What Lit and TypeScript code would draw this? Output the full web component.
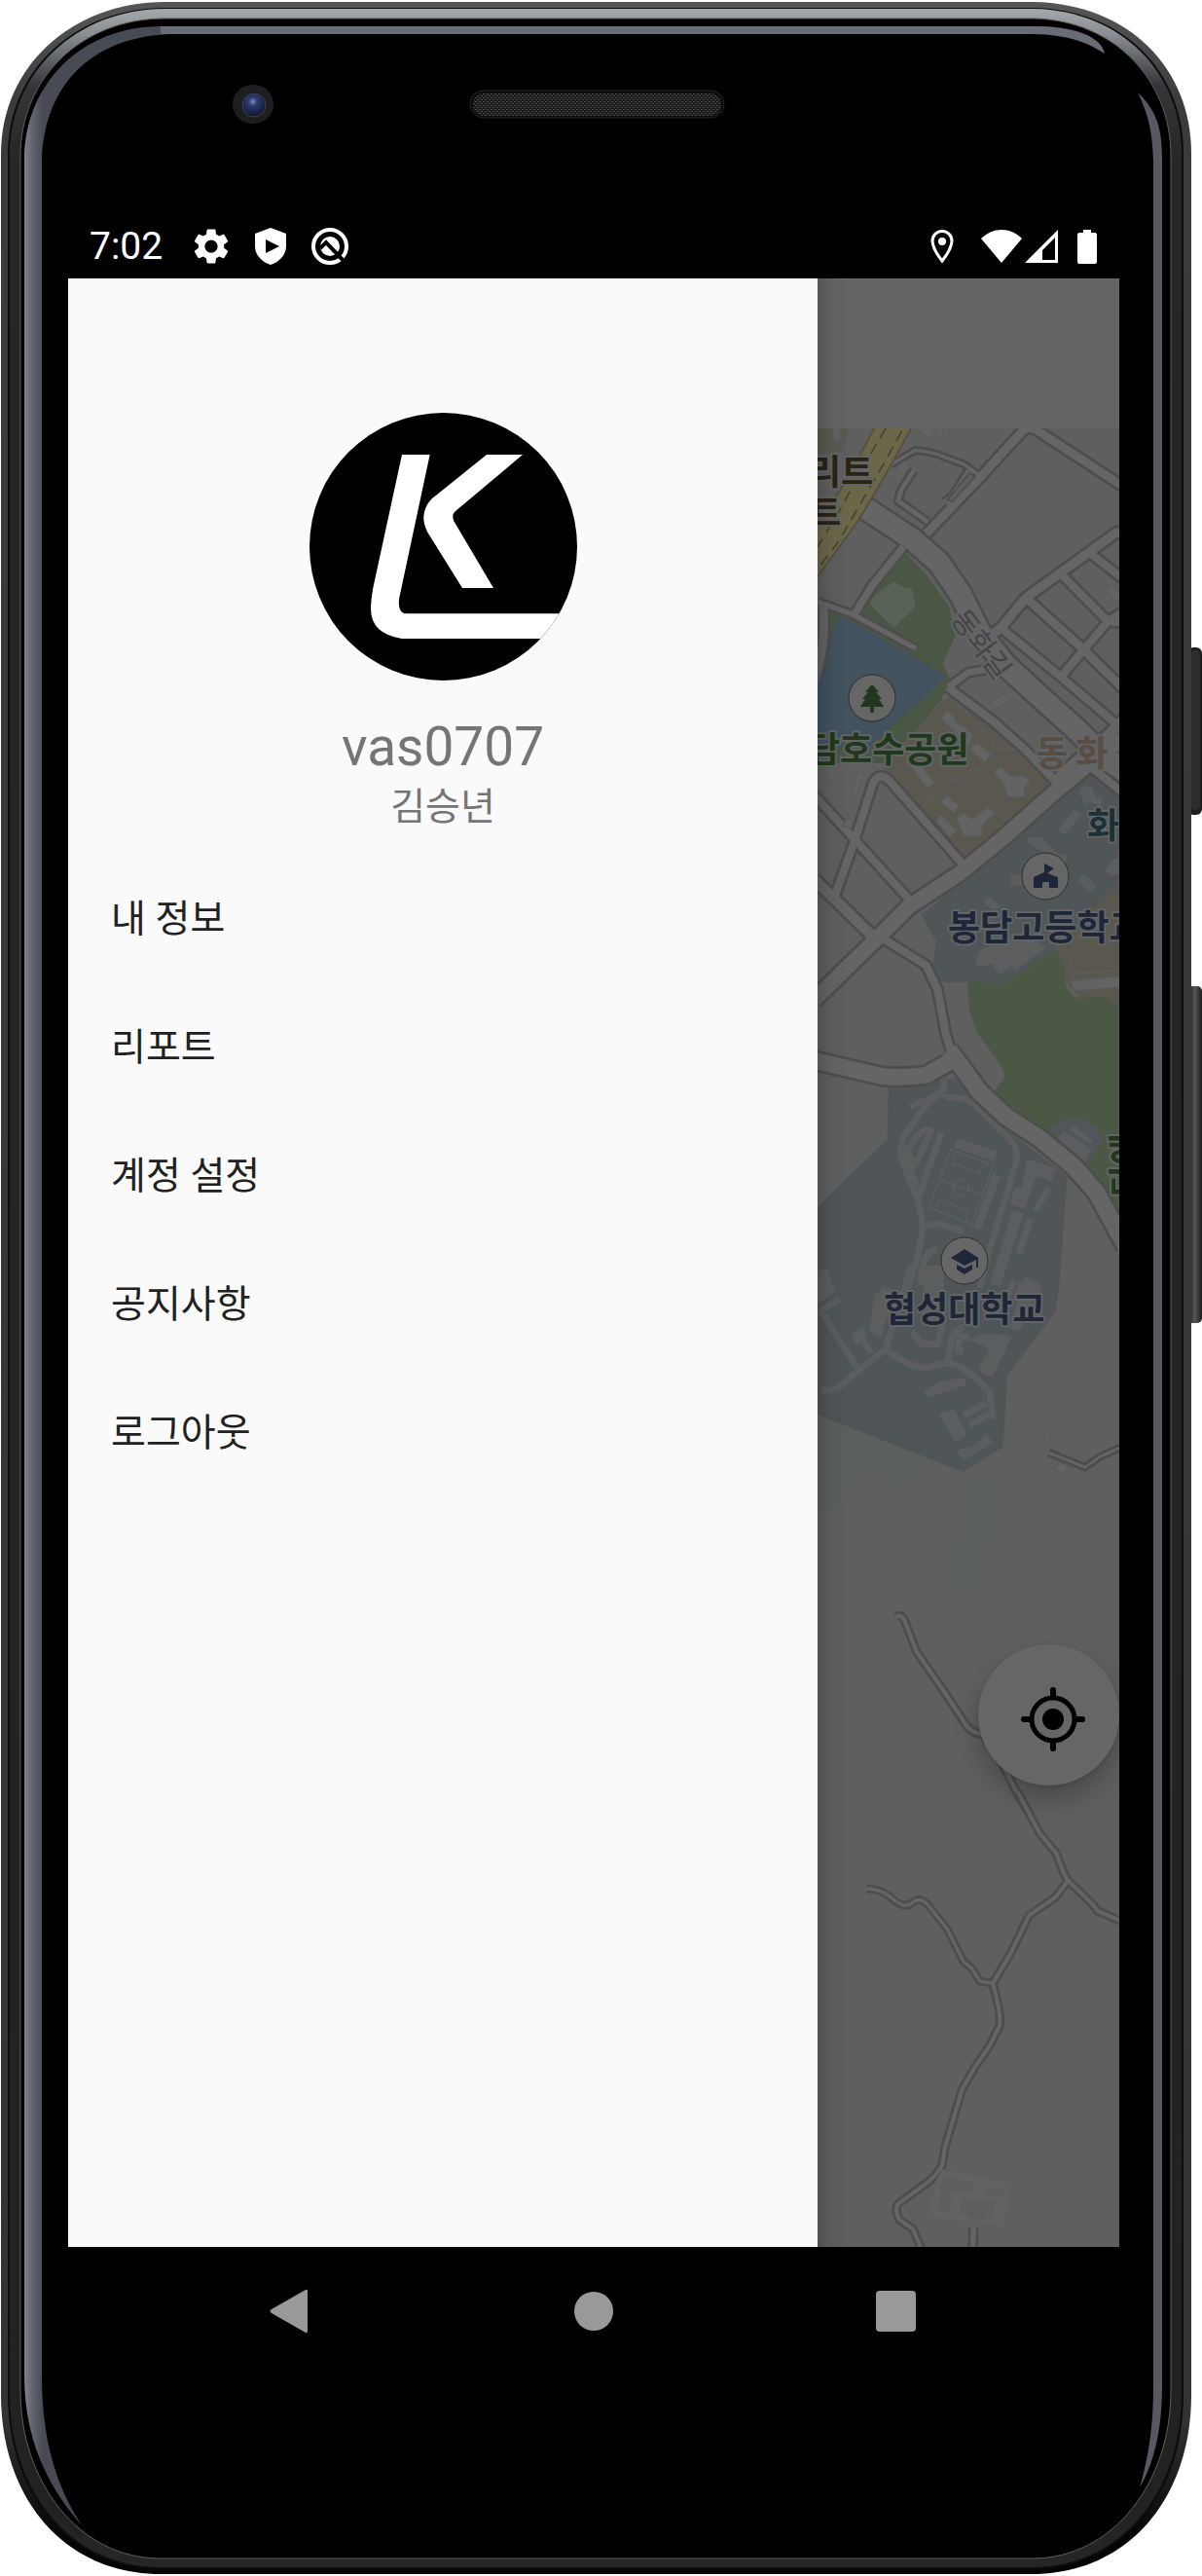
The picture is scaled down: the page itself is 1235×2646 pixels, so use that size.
import { LitElement, html, svg, css } from "lit";
import { customElement } from "lit/decorators.js";

type Road = { d: string; w: number };

const MENU = ["내 정보", "리포트", "계정 설정", "공지사항", "로그아웃"];

/* Roads of the upper map tile. */
const ROADS_NORTH: Road[] = [
  { d: "M205 305L350 400L435 475L500 570L560 690L640 790L760 900L860 990L940 1070L1010 1120", w: 76 },
  { d: "M395 385L560 212L690 70Q705 52 730 62L1000 238", w: 36 },
  { d: "M285 172L360 128Q410 130 450 148L510 170L560 205", w: 20 },
  { d: "M358 188L318 250L308 284L400 348", w: 24 },
  { d: "M530 192L480 270L455 290", w: 34 },
  { d: "M325 425L228 545L175 630", w: 32 },
  { d: "M60 594L165 632L362 738", w: 26 },
  { d: "M76 600Q88 700 60 810", w: 36 },
  { d: "M590 700L625 675L702 582L980 382L1010 378", w: 38 },
  { d: "M702 582L880 742L1010 870", w: 36 },
  { d: "M812 510L955 655L1010 660", w: 34 },
  { d: "M905 448L1010 530", w: 34 },
  { d: "M625 675L815 830L985 975", w: 34 },
  { d: "M1010 620L955 655L880 742L815 820", w: 34 },
  { d: "M462 858L525 812L600 800", w: 30 },
  { d: "M462 858L605 965L700 1050L800 1155", w: 34 },
  { d: "M790 1150L865 1080L940 1020L1010 950", w: 42 },
  { d: "M1010 1010L900 1090L780 1190L640 1315L500 1430L340 1535L250 1625L50 1820", w: 56 },
  { d: "M880 1085L1010 1190", w: 34 },
  { d: "M50 1190L175 1328L345 1515", w: 34 },
  { d: "M505 1400L360 1235L285 1150Q255 1115 232 1150L175 1328L110 1510", w: 34 },
  { d: "M50 1450L235 1630", w: 42 },
  { d: "M250 1625L395 1715L430 1790L455 1925L480 2010", w: 34 },
  { d: "M465 1975L560 2105L640 2180L740 2245L850 2335L920 2415L1010 2580", w: 62 },
  { d: "M50 2008L260 2057Q330 2062 395 2053L480 2005", w: 60 },
];

/* Thin trails of the lower, empty part. */
const ROADS_SOUTH: Road[] = [
  { d: "M210 300Q250 300 280 322Q325 365 350 345Q375 322 400 350L460 425L510 525L535 545L560 585L600 592", w: 20 },
  { d: "M832 275L795 325L712 382L655 500L600 592", w: 22 },
  { d: "M676 0L745 130L795 190L820 255L832 275L910 350L922 368L1000 402", w: 22 },
  { d: "M600 592Q630 700 620 725L590 785L545 850L505 920L452 1100L445 1150Q430 1180 400 1205L310 1270Q295 1285 312 1320L355 1350L382 1415", w: 22 },
  { d: "M541 1345L538 1420", w: 26 },
];

const TRAILS: Road[] = [
  { d: "M302 1010Q322 1000 332 1030L365 1110L450 1225L510 1310Q530 1345 570 1348L610 1400L650 1470L676 1520L712 1575", w: 22 },
  { d: "M772 538L885 580L930 550L1000 520", w: 18 },
];

const WALKS = [
  "M345 830L420 800L450 775L450 745",
  "M450 790Q400 800 350 890Q310 930 318 990L370 1120L385 1200L370 1290L335 1390",
  "M450 800Q520 800 550 830L650 930Q685 960 670 1010L640 1110L590 1270L560 1390",
  "M340 960Q380 890 410 905L360 1010L330 960L365 1080",
  "M442 910L370 1110",
  "M385 1200L430 1190L510 1215",
  "M430 1270Q380 1270 380 1380",
];

const roadSet = (roads: Road[]) => svg`
  <g class="casing">${roads.map((r) => svg`<path d=${r.d} stroke-width=${r.w + 6} />`)}</g>
  <g class="lane">${roads.map((r) => svg`<path d=${r.d} stroke-width=${Math.max(r.w - 10, 8)} />`)}</g>
`;

@customElement("map-view")
export class MapView extends LitElement {
  static styles = css`
    :host {
      display: block;
      position: relative;
      overflow: hidden;
      background: #5f5f5f;
    }
    .map {
      display: block;
      width: 100%;
      height: 100%;
    }
    .casing path,
    .lane path {
      fill: none;
      stroke-linejoin: round;
    }
    .casing path {
      stroke: #4d4d4d;
    }
    .lane path {
      stroke: #656565;
    }
    .walk {
      fill: none;
      stroke: #5b5d5f;
      stroke-width: 20;
      stroke-linejoin: round;
    }
    .building {
      fill: #626363;
      stroke: #5a5a5a;
      stroke-width: 3;
    }
    .pale {
      fill: #5b5d5f;
    }
    .pitch {
      fill: none;
      stroke: #5c5e60;
      stroke-width: 4;
    }
    .block {
      fill: #5f5f5f;
      stroke: #505050;
      stroke-width: 6;
    }
    .pin {
      fill: #666;
      stroke: #2e2e2e;
      stroke-width: 1;
    }
    .label {
      font-family: "Noto Sans CJK KR", "Noto Sans", sans-serif;
      font-size: 36px;
      font-weight: 700;
      paint-order: stroke;
      stroke: #626466;
      stroke-width: 4px;
      stroke-linejoin: round;
    }
    .navy {
      fill: #1e2638;
    }
    .green {
      fill: #20381b;
    }
    .brown {
      fill: #2b2214;
    }
    .teal {
      fill: #1d3034;
    }
    .tan {
      fill: #574d43;
    }
    .street {
      fill: #444;
      font-size: 29px;
      font-weight: 400;
    }
    .locate {
      position: absolute;
      right: 0;
      bottom: 474px;
      width: 145px;
      height: 145px;
      padding: 8px 0 0 9px;
      border: 0;
      border-radius: 50%;
      background: #666;
      box-shadow: 0 14px 28px rgba(0, 0, 0, 0.24), 0 2px 4px rgba(0, 0, 0, 0.1);
      display: grid;
      place-items: center;
    }
    .locate svg {
      width: 66px;
      height: 66px;
      display: block;
    }
  `;

  render() {
    return html`
      <svg class="map" viewBox="840 440 310 1868" preserveAspectRatio="xMinYMin slice" role="img" aria-label="지도">
        <g transform="translate(820 420) scale(.33333)">
          <path fill="#5a5a52" d="M60 60H155L140 130L60 140Z" />
          <path fill="#4b5745" d="M330 442L395 510L465 610L485 700L445 785L468 830L440 900L370 985L260 1092H60V1030L90 690L80 612L170 640Z" />
          <path fill="#596257" d="M298 532L330 555L350 550L362 610L295 675L220 600L240 570Z" />
          <path fill="#42525f" d="M120 650Q135 642 155 650L457 822L400 880L290 975L215 1045H60V850L95 750L102 692Z" />
          <path fill="#5a574f" d="M480 880L610 980L780 1160L515 1390L380 1240L262 1105L370 985L445 900Z" />
          <path fill="#505558" d="M900 1108L1000 1180V1480L900 1550L790 1665L635 1770L410 1765L425 1640L380 1560L700 1290Z" />
          <path fill="#5a574f" d="M1000 1455L905 1545L790 1665L830 1770L870 1815L1000 1850Z" />
          <path fill="#4c5846" d="M522 1763L635 1770L790 1665Q822 1700 825 1770Q835 1815 870 1815L940 1810L1000 1850V2510L930 2390L770 2230L600 2110L636 2060Q638 2040 620 2015L550 1920Q525 1850 525 1820Z" />
          <path fill="#52565a" d="M775 2225Q800 2190 850 2186Q910 2190 942 2245L890 2325Z" />
          <path fill="#505558" d="M430 2065H485L600 2190L830 2365L805 2700L795 2780L645 2978L632 3198L510 3277L60 3100V2460L275 2250L278 2090Z" />
          <path fill="#5c605c" d="M60 3105L400 3240Q350 3330 300 3320Q250 3300 230 3260L150 3340Q140 3390 60 3410Z" />
          <path fill="#5d615e" d="M535 3290Q570 3270 600 3310Q625 3400 590 3470Q550 3540 555 3620Q540 3670 490 3650Q455 3570 485 3480Q535 3400 530 3330Z" />

          <g transform="translate(0 1320)">
            ${WALKS.map((d) => svg`<path class="walk" d=${d} />`)}
            <path class="pitch" d="M470 962L602 1010L536 1192L404 1142ZM436 1056L570 1102M488 970L476 1005L562 1036L576 1000M425 1148L438 1118L526 1152L516 1186" />
            <circle class="pitch" cx="502" cy="1080" r="24" />
            <path class="pale" d="M492 928L615 968L605 1000L480 955ZM600 1035L625 1045L562 1212L540 1205ZM706 990L798 1022L780 1060L735 1045L698 1145L650 1130L668 1080L690 1078ZM765 1075L780 1090L740 1155L722 1148ZM660 1150L695 1158L625 1380H590ZM706 1172L726 1180L690 1290L670 1282Z" />
            <path class="pale" d="M710 0L750 0L800 50L835 60L820 80L710 20ZM655 115H700V150H655ZM560 350L640 310L700 290L765 340L670 410L660 395L620 425L600 390L560 400L545 385ZM590 180L625 215L600 225L570 200ZM880 112L918 150L900 170L862 135ZM980 60L1000 80V110L965 120L945 100Z" />
            <path class="pale" d="M850 888L910 935L900 945L838 905ZM820 905L905 960L885 1000L800 930Z" />
            <path class="pitch" d="M1000 190Q840 280 840 390Q840 420 870 420L1000 410" />
            <path class="building" d="M842 442L1000 428V462L848 474Z" />
          </g>
          <g transform="translate(0 2640) scale(1 1.0714)">
            <path class="walk" d="M70 360Q110 362 130 345L270 240L290 180L350 0M180 290L70 130L130 95M225 250L200 215M270 240Q350 300 400 292L460 280L475 200L510 175M460 280Q510 280 590 365L600 440M510 245H490L500 205H530" />
            <path class="walk" d="M510 432L580 395M530 460L590 425M380 0V50M350 190L380 225L430 225L450 150M665 45L640 100M690 50L670 100" />
            <path class="pale" d="M60 15L90 10L115 75L60 110ZM235 85L265 60L300 75L255 205L220 190ZM165 200L200 175L215 200L180 230ZM390 0H450V160L410 180L380 150ZM530 215Q570 185 660 205L600 318Q560 320 560 290L590 240ZM388 365Q440 320 518 325L515 345L435 370L400 380ZM432 425L480 412L522 488L485 508ZM485 530L540 520L580 480L600 510L510 560ZM700 30L755 60L680 190L650 180Z" />
            <path class="building" d="M755 487L762 492L752 507L743 502ZM785 590L805 565L832 580L820 600L800 590Z" />
          </g>

          ${roadSet(ROADS_NORTH)}
          <g transform="translate(0 2640) scale(1 1.0714)">${roadSet(TRAILS)}</g>
          <g transform="translate(0 4260)">
            ${roadSet(ROADS_SOUTH)}
            <path class="building" fill-opacity="0" d="M675 365L710 332L732 350L692 388Z" />
            <path fill="#626262" d="M445 1165L655 1210L632 1340L410 1310L425 1200Z" />
            <path fill="#5e5e5e" d="M445 1185L540 1205V1235L475 1230L465 1295H432ZM570 1218L632 1225V1248L572 1242ZM505 1255L605 1262L600 1310L550 1325L500 1300Z" />
          </g>

          <path fill="#6b684a" stroke="#575040" stroke-width="6" d="M240 50L195 135L130 250L50 375V530L185 345L235 262L285 175L354 50Z" />
          <path fill="none" stroke="#444335" stroke-width="5" stroke-dasharray="34 22" d="M270 60L205 170L130 310L60 425M320 68L258 180L205 270L150 365L120 415L55 500" />

          <path class="building" d="M105 50H130V100H107ZM360 50H430L405 90L380 75ZM430 60H450L438 95L425 90ZM305 180L325 160L345 180L325 205ZM590 910L635 878L652 895L615 922ZM945 555L970 540L1000 580V605L985 600Z" />
          <path class="building" d="M440 955L460 932L480 945L485 965L520 985L540 1010L525 1035ZM530 1045L550 1030L595 1065L575 1090ZM335 1085L350 1075L375 1095L420 1150L400 1170ZM605 1120L620 1103L665 1135L690 1130L715 1145L695 1170L700 1195H645L635 1155ZM440 1210L460 1190L495 1225L480 1247ZM490 1260L510 1245L540 1265L585 1225L605 1245L570 1280L565 1315H510ZM425 1270L440 1250L488 1300L468 1320ZM90 1125L103 1115L118 1145L108 1155ZM165 1180L185 1118L200 1125L180 1187ZM135 1285L150 1262L170 1270L165 1290Z" />
          <path class="pale" d="M865 1180L885 1160L905 1165L920 1200L940 1195L930 1225L900 1210L885 1220ZM800 1295L850 1235L875 1250L820 1315Z" />
          <path class="pitch" d="M485 905L605 1020L590 1095L465 1150L385 1225M610 1050H670" />
          <path class="block" d="M528 198L545 210L475 285L460 280Z" />
        </g>

        <circle class="pin" cx="896" cy="717" r="24" />
        <path fill="#20381b" d="M896 703L903 711H900L906 718H903L908 726H898V732H894V726H884L889 718H886L892 711H889Z" />
        <circle class="pin" cx="1074" cy="900" r="24" />
        <path fill="#1e2638" d="M1073 887L1083 892L1076 897L1087 901V912H1078V906H1071V912H1062V901L1073 896Z" />
        <circle class="pin" cx="991" cy="1295" r="24" />
        <path fill="#1e2638" d="M991 1283L1005 1292V1302H1003V1294L991 1300L977 1292ZM983 1299L991 1303L999 1299V1304L991 1309L983 1304Z" />

        <text class="label brown" x="831" y="498">리트</text>
        <text class="label brown" x="831" y="540">트</text>
        <text class="label green" x="830" y="783">담호수공원</text>
        <text class="label tan" x="1064" y="787">동 화</text>
        <text class="label teal" x="1117" y="861">화</text>
        <text class="label navy" x="974" y="966">봉담고등학교</text>
        <text class="label navy" x="908" y="1358">협성대학교</text>
        <text class="label street" transform="translate(976 636) rotate(53)">동화길</text>
        <text class="label green" transform="translate(1170 1230) rotate(-90)">디에</text>
      </svg>
      <button class="locate" type="button" aria-label="현재 위치">
        <svg viewBox="0 0 66 66" aria-hidden="true">
          <circle cx="33" cy="33" r="22" fill="none" stroke="#000" stroke-width="5" />
          <circle cx="33" cy="33" r="11" />
          <path d="M33 3V10M33 56V63M3 33H10M56 33H63" stroke="#000" stroke-width="6" stroke-linecap="round" />
        </svg>
      </button>
    `;
  }
}

@customElement("side-drawer")
export class SideDrawer extends LitElement {
  static styles = css`
    :host {
      display: block;
      background: #fafafa;
      font-family: Roboto, "Noto Sans CJK KR", sans-serif;
    }
    .profile {
      display: flex;
      flex-direction: column;
      align-items: center;
      padding-top: 138px;
      color: #757575;
    }
    .avatar {
      width: 275px;
      height: 275px;
      border-radius: 50%;
      background: #000;
      display: block;
    }
    .user {
      margin: 36px 0 0;
      font-size: 55px;
      line-height: 64px;
      font-weight: 400;
    }
    .name {
      margin: 0;
      font-size: 39px;
      line-height: 60px;
    }
    .menu {
      list-style: none;
      margin: 19px 0 0;
      padding: 0;
    }
    .item {
      display: flex;
      align-items: center;
      width: 100%;
      height: 132px;
      padding: 0 44px;
      border: 0;
      background: none;
      font: inherit;
      font-size: 39px;
      line-height: 58px;
      color: #212121;
      text-align: left;
    }
  `;

  render() {
    return html`
      <header class="profile">
        <svg class="avatar" viewBox="81 71 825 825" role="img" aria-label="프로필">
          <g fill="#fff">
            <path d="M366 200H452L358 640Q350 690 382 690H920V767H365Q270 752 270 675Q270 650 277 610Z" />
            <path d="M627 200H738L530 375Q518 386 526 405L648 611H552L444 438Q416 380 458 336Z" />
          </g>
        </svg>
        <h1 class="user">vas0707</h1>
        <p class="name">김승년</p>
      </header>
      <nav>
        <ul class="menu">
          ${MENU.map((m) => html`<li><button class="item" type="button">${m}</button></li>`)}
        </ul>
      </nav>
    `;
  }
}

@customElement("app-root")
export class AppRoot extends LitElement {
  static styles = css`
    :host {
      display: block;
      background: #fff;
      font-family: Roboto, "Noto Sans CJK KR", sans-serif;
    }
    .device {
      position: relative;
      box-sizing: border-box;
      min-height: 100vh;
      padding: 220px 85px 206px 70px;
      display: flex;
      flex-direction: column;
    }
    .shell {
      position: absolute;
      inset: 0;
      width: 100%;
      height: 100%;
    }
    .screen {
      position: relative;
      flex: 1;
      display: flex;
      flex-direction: column;
      background: #000;
    }
    .status {
      height: 66px;
      box-sizing: border-box;
      padding: 0 22px;
      display: flex;
      align-items: center;
      justify-content: space-between;
      color: #fff;
      font-size: 39px;
      line-height: 66px;
    }
    .group {
      display: flex;
      align-items: center;
    }
    .time {
      margin-right: 28px;
    }
    .icon {
      width: 44px;
      height: 44px;
      display: block;
      fill: #fff;
    }
    .left .icon {
      margin-right: 17px;
    }
    .pin {
      margin-right: 17px;
    }
    .signal {
      width: 36px;
      margin-left: 1px;
    }
    .battery {
      width: 22px;
      margin-left: 18px;
    }
    .body {
      flex: 1;
      display: grid;
      grid-template-columns: 77fr 31fr;
    }
    .page {
      position: relative;
      display: flex;
      flex-direction: column;
      min-width: 0;
      background: #5f5f5f;
    }
    .page::before {
      content: "";
      position: absolute;
      inset: 0 auto 0 0;
      width: 34px;
      z-index: 1;
      background: linear-gradient(to right, rgba(0, 0, 0, 0.17), rgba(0, 0, 0, 0.06) 35%, rgba(0, 0, 0, 0));
    }
    .bar {
      height: 154px;
      background: #656565;
    }
    .map {
      flex: 1;
      min-height: 0;
    }
    .keys {
      height: 132px;
      display: flex;
      justify-content: center;
    }
    .key {
      width: 310px;
      padding: 0;
      border: 0;
      background: none;
      display: grid;
      place-items: center;
    }
    .key svg {
      width: 66px;
      height: 66px;
      fill: #999;
      display: block;
    }
  `;

  private shell() {
    return html`
      <svg class="shell" viewBox="0 0 1235 2646" preserveAspectRatio="none" aria-hidden="true">
        <defs>
          <linearGradient id="rim" x1="0" y1="0" x2="0" y2="1">
            <stop offset="0" stop-color="#a4a7ac" />
            <stop offset=".01" stop-color="#8a8d92" />
            <stop offset=".03" stop-color="#34363a" />
            <stop offset=".06" stop-color="#262626" />
            <stop offset=".98" stop-color="#222" />
            <stop offset="1" stop-color="#262626" />
          </linearGradient>
          <linearGradient id="edge" x1="0" y1="0" x2="0" y2="1">
            <stop offset="0" stop-color="#575656" />
            <stop offset=".04" stop-color="#3c3b3b" />
            <stop offset=".94" stop-color="#333" />
            <stop offset=".985" stop-color="#050505" />
          </linearGradient>
          <linearGradient id="glint" gradientUnits="userSpaceOnUse" x1="24" y1="0" x2="44" y2="0">
            <stop offset="0" stop-color="#82858d" />
            <stop offset=".4" stop-color="#666972" />
            <stop offset="1" stop-color="#484b53" />
          </linearGradient>
          <linearGradient id="key" x1="0" y1="0" x2="1" y2="0">
            <stop offset="0" stop-color="#111" />
            <stop offset=".5" stop-color="#555" />
            <stop offset="1" stop-color="#1c1c1c" />
          </linearGradient>
          <radialGradient id="lens" cx=".45" cy=".35" r=".6">
            <stop offset="0" stop-color="#8291b8" />
            <stop offset=".3" stop-color="#2c3c72" />
            <stop offset="1" stop-color="#141a35" />
          </radialGradient>
          <pattern id="mesh" width="4" height="4" patternUnits="userSpaceOnUse">
            <rect width="4" height="4" fill="#191a1a" />
            <path d="M0 0h2v1H0zM2 2h2v1H2z" fill="#4c4e4d" />
          </pattern>
        </defs>
        <rect x="1220" y="665" width="15" height="172" rx="6" fill="#1d1d1d" />
        <rect x="1224" y="668" width="9" height="164" rx="4" fill="#2d2d2d" />
        <rect x="1220" y="1013" width="15" height="346" rx="5" fill="url(#key)" />
        <path fill="url(#edge)" d="M170 2H1062C1160 4 1224 70 1224 158V2460C1224 2565 1160 2644 1060 2644H165C65 2644 1 2565 1 2460V158C1 70 72 2 170 2Z" />
        <path fill="#0c0c0c" d="M170 8H1062C1155 10 1216 74 1216 158V2460C1216 2560 1155 2639 1060 2639H165C70 2639 8 2560 8 2460V158C8 74 76 8 170 8Z" />
        <path fill="url(#rim)" d="M170 9H1062C1153 11 1214 75 1214 158V2460C1214 2558 1153 2637 1060 2637H165C72 2637 10 2558 10 2460V158C10 75 78 9 170 9Z" />
        <path fill="#000" stroke="#5c5c5c" stroke-width="1" d="M170 19H1062C1145 21 1203 82 1203 160V2456C1203 2548 1145 2628 1060 2628H165C80 2628 21 2548 21 2456V160C21 82 82 19 170 19Z" />
        <path fill="url(#glint)" d="M25 165C25 85 85 27 165 27H190V35H175C92 38 43 90 43 170V2440C43 2500 55 2550 84 2594C45 2550 25 2500 25 2440Z" />
        <path fill="#696c74" d="M165 27H1070C1105 28 1132 38 1135 55C1115 42 1095 36 1062 35H165Z" />
        <path fill="#565961" d="M1169 95C1190 115 1194 135 1194 165V2450C1194 2495 1186 2530 1171 2555C1181 2520 1185 2490 1185 2450V165C1184 135 1180 118 1169 95Z" />
        <ellipse cx="260" cy="107" rx="21" ry="20" fill="#1e1e20" />
        <circle cx="261" cy="108" r="12" fill="url(#lens)" stroke="#3c4048" stroke-width="1" />
        <rect x="483" y="93" width="261" height="28" rx="14" fill="#0b0b0b" stroke="#242424" stroke-width="1" />
        <rect x="486" y="96" width="255" height="23" rx="11" fill="url(#mesh)" />
      </svg>
    `;
  }

  render() {
    return html`
      <div class="device">
        ${this.shell()}
        <main class="screen">
          <div class="status">
            <div class="group left">
              <span class="time">7:02</span>
              <svg class="icon" viewBox="0 0 24 24" aria-hidden="true">
                <path d="M19.14 12.94c.04-.3.06-.61.06-.94 0-.32-.02-.64-.07-.94l2.03-1.58c.18-.14.23-.41.12-.61l-1.92-3.32c-.12-.22-.37-.29-.59-.22l-2.39.96c-.5-.38-1.03-.7-1.62-.94l-.36-2.54c-.04-.24-.24-.41-.48-.41h-3.84c-.24 0-.43.17-.47.41l-.36 2.54c-.59.24-1.13.57-1.62.94l-2.39-.96c-.22-.08-.47 0-.59.22L2.74 8.87c-.12.21-.08.47.12.61l2.03 1.58c-.05.3-.09.63-.09.94s.02.64.07.94l-2.03 1.58c-.18.14-.23.41-.12.61l1.92 3.32c.12.22.37.29.59.22l2.39-.96c.5.38 1.03.7 1.62.94l.36 2.54c.05.24.24.41.48.41h3.84c.24 0 .44-.17.47-.41l.36-2.54c.59-.24 1.13-.56 1.62-.94l2.39.96c.22.08.47 0 .59-.22l1.92-3.32c.12-.22.07-.47-.12-.61l-2.01-1.58zM12 15.6c-1.98 0-3.6-1.62-3.6-3.6s1.62-3.6 3.6-3.6 3.6 1.62 3.6 3.6-1.62 3.6-3.6 3.6z" />
              </svg>
              <svg class="icon" viewBox="0 0 44 44" aria-hidden="true">
                <path fill-rule="evenodd" d="M22 3L38 9V22C38 31 31 38 22 41C13 38 6 31 6 22V9ZM17 15V29L31 22Z" />
              </svg>
              <svg class="icon" viewBox="0 0 44 44" aria-hidden="true">
                <circle cx="22" cy="22" r="17" fill="none" stroke="#fff" stroke-width="4" />
                <circle cx="22" cy="22" r="10" />
                <path d="M12 24L18 18L37 38" fill="none" stroke="#000" stroke-width="4" />
              </svg>
            </div>
            <div class="group">
              <svg class="icon pin" viewBox="0 0 44 44" aria-hidden="true">
                <path fill="none" stroke="#fff" stroke-width="3" d="M22 37C15 28 12 22 12 16.500A10 10 0 0 1 32 16.500C32 22 29 28 22 37Z" />
                <circle cx="22" cy="17" r="4" />
              </svg>
              <svg class="icon" viewBox="0 0 44 44" aria-hidden="true">
                <path d="M1 14Q10 5 22 5T43 14L22 39Z" />
              </svg>
              <svg class="icon signal" viewBox="0 0 36 44" aria-hidden="true">
                <path fill-rule="evenodd" d="M1 39L35 5V39ZM19 26V36H32V13Z" />
              </svg>
              <svg class="icon battery" viewBox="0 0 22 44" aria-hidden="true">
                <path d="M7 5H15V8H19Q21 8 21 10V38Q21 40 19 40H3Q1 40 1 38V10Q1 8 3 8H7Z" />
              </svg>
            </div>
          </div>
          <div class="body">
            <side-drawer></side-drawer>
            <div class="page">
              <div class="bar"></div>
              <map-view class="map"></map-view>
            </div>
          </div>
          <div class="keys">
            <button class="key" type="button" aria-label="뒤로">
              <svg viewBox="0 0 66 66"><path d="M47 11Q49 10 49 13V53Q49 56 47 55L12 35Q9 33 12 31Z" /></svg>
            </button>
            <button class="key" type="button" aria-label="홈">
              <svg viewBox="0 0 66 66"><circle cx="33" cy="33" r="20" /></svg>
            </button>
            <button class="key" type="button" aria-label="최근 앱">
              <svg viewBox="0 0 66 66"><rect x="13" y="12" width="41" height="42" rx="4" /></svg>
            </button>
          </div>
        </main>
      </div>
    `;
  }
}
